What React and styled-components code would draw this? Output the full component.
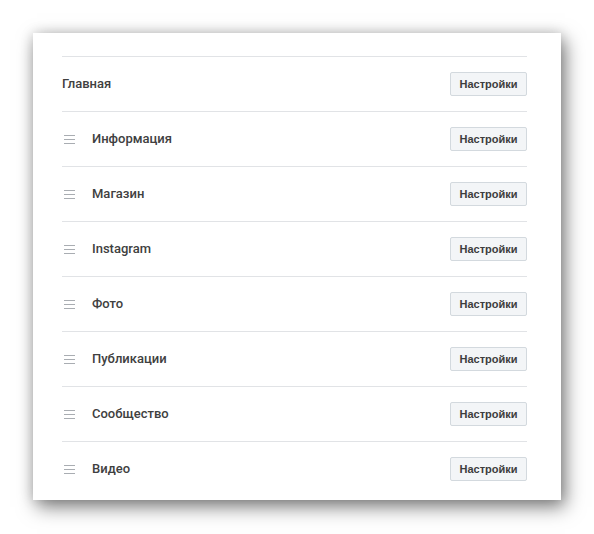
import React from "react";
import styled, { createGlobalStyle } from "styled-components";

const GlobalStyle = createGlobalStyle`
  body {
    margin: 0;
    background: #fff;
    font-family: Roboto, "Open Sans", "Liberation Sans", sans-serif;
  }
`;

const Page = styled.div`
  padding: 33px 0 0 33px;
  width: 594px;
  height: 534px;
  box-sizing: border-box;
`;

const Card = styled.div`
  width: 528px;
  height: 467px;
  box-sizing: border-box;
  background: #fff;
  padding: 23px 34px 0 29px;
  box-shadow: 4px 7px 18px rgba(0, 0, 0, 0.5), 0 0 12px rgba(0, 0, 0, 0.15);
`;

const Row = styled.div`
  display: flex;
  align-items: center;
  height: 55px;
  box-sizing: border-box;
  border-top: 1px solid #e1e3e6;
`;

const Handle = styled.div`
  width: 11px;
  height: 9px;
  margin: 0 17px 0 2px;
  display: flex;
  flex-direction: column;
  justify-content: space-between;

  & > span {
    display: block;
    height: 1px;
    background: #a9adb2;
  }
`;

const Label = styled.div`
  flex: 1;
  padding-bottom: 2px;
  font-size: 13px;
  font-weight: 500;
  color: #404040;
`;

const Button = styled.button`
  height: 24px;
  width: 77px;
  padding: 0;
  border: 1px solid #d3d9de;
  border-radius: 2px;
  background: #f3f5f7;
  font-family: "Liberation Sans", Arial, sans-serif;
  font-size: 11px;
  font-weight: 700;
  color: #3d3d3d;
`;

const items = [
  { name: "Главная", fixed: true },
  { name: "Информация" },
  { name: "Магазин" },
  { name: "Instagram" },
  { name: "Фото" },
  { name: "Публикации" },
  { name: "Сообщество" },
  { name: "Видео" },
];

export default function App() {
  return (
    <Page>
      <GlobalStyle />
      <Card>
        {items.map((item) => (
          <Row key={item.name}>
            {!item.fixed && (
              <Handle>
                <span />
                <span />
                <span />
              </Handle>
            )}
            <Label>{item.name}</Label>
            <Button>Настройки</Button>
          </Row>
        ))}
      </Card>
    </Page>
  );
}
